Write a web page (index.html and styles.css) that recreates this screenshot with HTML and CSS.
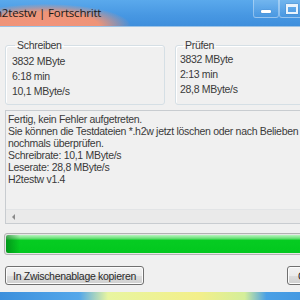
FILE: index.html
```html
<!DOCTYPE html>
<html lang="de">
<head>
    <meta charset="UTF-8">
    <title>H2testw | Fortschritt</title>
    <link rel="stylesheet" href="styles.css">
</head>
<body>
    <div class="window">
        <div class="titlebar">
            <div class="glow"></div>
            <span class="title">h2testw | Fortschritt</span>
            <div class="caption-btns">
                <div class="cap-btn"><span class="min-glyph"></span></div>
                <div class="cap-btn"><span class="max-glyph"></span></div>
            </div>
        </div>

        <div class="client">
            <div class="groups">
                <fieldset class="group group-write">
                    <legend>Schreiben</legend>
                    <div class="val">3832 MByte</div>
                    <div class="val">6:18 min</div>
                    <div class="val">10,1 MByte/s</div>
                </fieldset>
                <fieldset class="group group-verify">
                    <legend>Prüfen</legend>
                    <div class="val">3832 MByte</div>
                    <div class="val">2:13 min</div>
                    <div class="val">28,8 MByte/s</div>
                </fieldset>
            </div>

            <div class="log">
                <div class="log-text">
                    <div>Fertig, kein Fehler aufgetreten.</div>
                    <div>Sie können die Testdateien *.h2w jetzt löschen oder nach Belieben</div>
                    <div>nochmals überprüfen.</div>
                    <div>Schreibrate: 10,1 MByte/s</div>
                    <div>Leserate: 28,8 MByte/s</div>
                    <div>H2testw v1.4</div>
                </div>
                <div class="hscroll"><span class="arrow-left"></span></div>
            </div>

            <div class="progress"><div class="progress-fill"></div></div>

            <div class="buttons">
                <button class="btn btn-copy">In Zwischenablage kopieren</button>
                <button class="btn btn-close">OK</button>
            </div>
        </div>

        <div class="taskbar"></div>
    </div>
</body>
</html>
```

FILE: styles.css
```css
body {
    margin: 0;
    width: 300px;
    height: 300px;
    overflow: hidden;
    background-color: #f0f0f0;
    font-family: "Liberation Sans", Arial, sans-serif;
    font-size: 10.5px;
    letter-spacing: -0.3px;
    color: #3a3a3a;
}
.window {
    width: 360px;
    height: 300px;
    display: flex;
    flex-direction: column;
}
.titlebar {
    position: relative;
    height: 26px;
    flex: none;
    background: linear-gradient(to bottom, #5aa9ec 0%, #4797e2 60%, #3f8fdc 100%);
    border-bottom: 1px solid #9cc3e6;
    display: flex;
    align-items: center;
    overflow: hidden;
}
.glow {
    position: absolute;
    left: -40px;
    top: 4px;
    width: 170px;
    height: 44px;
    border-radius: 50%;
    background: radial-gradient(ellipse at center, #f2947c 0%, #ee9478 45%, rgba(238, 140, 110, 0) 72%);
}
.title {
    position: relative;
    margin-left: -5px;
    margin-top: -2px;
    font-family: "Open Sans", "DejaVu Sans", sans-serif;
    font-size: 11.5px;
    letter-spacing: -0.2px;
    color: #1a1a1a;
}
.caption-btns {
    position: absolute;
    left: 253px;
    top: 0;
    display: flex;
}
.cap-btn {
    width: 24px;
    height: 17px;
    border: 1px solid rgba(255, 255, 255, 0.35);
    border-top: none;
    border-radius: 0 0 3px 3px;
    background: linear-gradient(to bottom, rgba(255,255,255,0.15), rgba(255,255,255,0.02));
    display: flex;
    align-items: center;
    justify-content: center;
}
.min-glyph {
    width: 10px;
    height: 3px;
    margin-top: 5px;
    background-color: #fff;
    border-radius: 1px;
    box-shadow: 0 0 1px #2a5f9a;
}
.max-glyph {
    width: 8px;
    height: 5px;
    border: 2px solid #e9f3fc;
    border-top-width: 3px;
    box-shadow: 0 0 1px #2a5f9a;
}
.client {
    flex: 1;
    padding: 12px 0 0 5px;
    display: flex;
    flex-direction: column;
}
.groups {
    display: flex;
    gap: 10px;
}
.group {
    margin: 0;
    padding: 3px 0 5px 6px;
    border: 1px solid #d5dfe5;
    border-radius: 3px;
    box-shadow: inset 1px 1px 0 #fff;
}
.group legend {
    padding: 0 2px;
    margin-left: 3px;
}
.group-write {
    width: 160px;
    box-sizing: border-box;
}
.group-verify {
    flex: 1;
    padding: 1px 0 7px 4px;
}
.val {
    line-height: 15px;
}
.log {
    margin-top: 5px;
    height: 114px;
    box-sizing: border-box;
    border: 1px solid #c8ccd0;
    background-color: #f0f0f0;
    display: flex;
    flex-direction: column;
}
.log-text {
    flex: 1;
    padding: 2px 0 0 2px;
    line-height: 12px;
    white-space: nowrap;
}
.hscroll {
    height: 13px;
    border-top: 1px solid #e2e4e6;
    background-color: #eaeaea;
    display: flex;
    align-items: center;
    padding-left: 6px;
}
.arrow-left {
    width: 0;
    height: 0;
    border-top: 3px solid transparent;
    border-bottom: 3px solid transparent;
    border-right: 3px solid #8a8a8a;
}
.progress {
    margin: 9px 0 0 -1px;
    height: 18px;
    border: 1px solid #b2b2b2;
    border-radius: 3px;
    background-color: #e6e6e6;
    padding: 1px;
}
.progress-fill {
    height: 100%;
    border-radius: 2px;
    background:
        linear-gradient(to right, rgba(0, 110, 20, 0.55) 0, rgba(0, 110, 20, 0) 14px),
        linear-gradient(to bottom, #b8f5bf 0%, #6ee07b 18%, #06cc22 30%, #02c81e 100%);
}
.buttons {
    margin-top: 11px;
    display: flex;
    justify-content: space-between;
}
.btn {
    height: 19px;
    font-family: inherit;
    font-size: 10.5px;
    letter-spacing: -0.3px;
    color: #2a2a2a;
    border: 1px solid #707070;
    border-radius: 3px;
    background: linear-gradient(to bottom, #f2f2f2 0%, #ebebeb 50%, #dddddd 51%, #cfcfcf 100%);
    padding: 0 6px;
    white-space: nowrap;
    box-shadow: inset 0 0 0 1px #fcfcfc;
}
.btn-copy {
    width: 139px;
}
.btn-close {
    width: 75px;
    margin-right: -2px;
    text-align: left;
    padding-left: 10px;
}
.taskbar {
    height: 8px;
    flex: none;
    background: linear-gradient(to right, #3b8fdc 0%, #54a7ea 22%, #e8f5a0 30%, #f3ef8a 55%, #d4ee9a 68%, #4aa0e6 74%, #3a8cdb 100%);
}
```
